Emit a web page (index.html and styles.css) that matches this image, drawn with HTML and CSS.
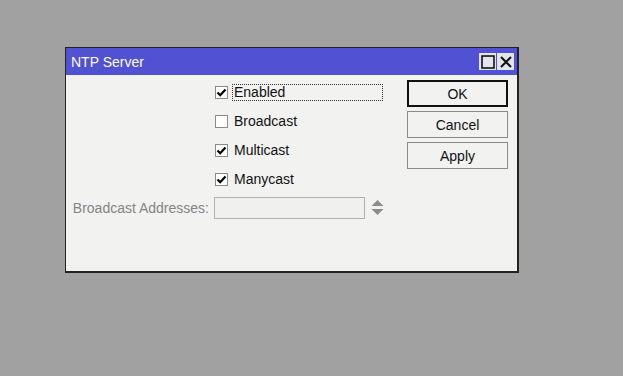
FILE: index.html
```html
<!DOCTYPE html>
<html lang="en">
<head>
  <meta charset="UTF-8">
  <title>NTP Server</title>
  <link rel="stylesheet" href="styles.css">
</head>
<body>
  <div class="window">
    <div class="titlebar">
      <span class="title">NTP Server</span>
      <div class="winButtons">
        <span class="winBtn"><svg width="14" height="14" viewBox="0 0 14 14"><rect x="1" y="1" width="12" height="12" fill="none" stroke="#111" stroke-width="1.6"/></svg></span>
        <span class="winBtn"><svg width="14" height="14" viewBox="0 0 14 14"><path d="M2 2 L12 12 M12 2 L2 12" stroke="#111" stroke-width="2"/></svg></span>
      </div>
    </div>
    <div class="content">
      <div class="form">
        <div class="row">
          <span></span>
          <label class="check">
            <span class="box checked"><svg width="11" height="11" viewBox="0 0 11 11"><path d="M1.5 5.5 L4.2 8.2 L9.5 2.5" fill="none" stroke="#000" stroke-width="2.2"/></svg></span>
            <span class="text focus">Enabled</span>
          </label>
        </div>
        <div class="row">
          <span></span>
          <label class="check">
            <span class="box"></span>
            <span class="text">Broadcast</span>
          </label>
        </div>
        <div class="row">
          <span></span>
          <label class="check">
            <span class="box checked"><svg width="11" height="11" viewBox="0 0 11 11"><path d="M1.5 5.5 L4.2 8.2 L9.5 2.5" fill="none" stroke="#000" stroke-width="2.2"/></svg></span>
            <span class="text">Multicast</span>
          </label>
        </div>
        <div class="row">
          <span></span>
          <label class="check">
            <span class="box checked"><svg width="11" height="11" viewBox="0 0 11 11"><path d="M1.5 5.5 L4.2 8.2 L9.5 2.5" fill="none" stroke="#000" stroke-width="2.2"/></svg></span>
            <span class="text">Manycast</span>
          </label>
        </div>
        <div class="row field">
          <span class="fieldLabel">Broadcast Addresses:</span>
          <div class="fieldInput">
            <input type="text" disabled>
            <svg class="spinner" width="13" height="17" viewBox="0 0 13 17"><path d="M6.5 1 L12.5 7 L0.5 7 Z M0.5 10 L12.5 10 L6.5 16 Z" fill="#8c8c8c"/></svg>
          </div>
        </div>
      </div>
      <div class="buttons">
        <button class="default">OK</button>
        <button>Cancel</button>
        <button>Apply</button>
      </div>
    </div>
  </div>
</body>
</html>
```

FILE: styles.css
```css
html, body {
  margin: 0;
  padding: 0;
}
body {
  background-color: #a1a1a1;
  font-family: "Liberation Sans", Arial, sans-serif;
  font-size: 14px;
  color: #111;
  padding: 47px 0 0 65px;
  height: 376px;
  box-sizing: border-box;
}
div.window {
  width: 454px;
  height: 226px;
  box-sizing: border-box;
  border: 1px solid #222;
  border-right-width: 2px;
  border-bottom-width: 2px;
  background-color: #f2f2f1;
  display: flex;
  flex-direction: column;
}
div.titlebar {
  height: 27px;
  background-color: #5151d3;
  color: #fff;
  display: flex;
  align-items: center;
  justify-content: space-between;
  padding: 0 3px 0 5px;
  box-sizing: border-box;
}
span.title {
  font-size: 14px;
  padding-top: 1px;
}
div.winButtons {
  display: flex;
  gap: 1px;
}
span.winBtn {
  width: 17px;
  height: 17px;
  background-color: #e4e4ec;
  display: flex;
  align-items: center;
  justify-content: center;
}
div.content {
  flex: 1;
  display: flex;
  justify-content: space-between;
}
div.form {
  padding: 3px 0 0 9px;
  display: grid;
  grid-template-columns: 134px 170px;
  column-gap: 5px;
  align-content: start;
}
div.row {
  display: contents;
}
div.row > * {
  height: 29px;
  display: flex;
  align-items: center;
}
label.check {
  gap: 4px;
}
span.box {
  width: 13px;
  height: 13px;
  margin-left: 1px;
  box-sizing: border-box;
  border: 1px solid #8a8a8a;
  background-color: #fff;
  display: flex;
  align-items: center;
  justify-content: center;
}
span.text {
  padding: 0 2px 1px 1px;
  border: 1px solid transparent;
  line-height: 14px;
}
span.text.focus {
  width: 151px;
  box-sizing: border-box;
  border: 1px dotted #333;
}
div.row.field > * {
  height: 27px;
}
span.fieldLabel {
  color: #858585;
  justify-content: flex-end;
  white-space: nowrap;
}
div.fieldInput {
  gap: 6px;
}
div.fieldInput input {
  width: 151px;
  height: 22px;
  box-sizing: border-box;
  border: 1px solid #b0b0b0;
  background-color: #f0f0f0;
  margin: 0;
}
div.buttons {
  padding: 5px 9px 0 0;
  display: flex;
  flex-direction: column;
  gap: 4px;
}
button {
  width: 101px;
  height: 27px;
  font-family: inherit;
  font-size: 14px;
  color: #111;
  background-color: #f2f2f1;
  border: 1px solid #8a8a8a;
  margin: 0;
}
button.default {
  border: 2px solid #111;
}
```
